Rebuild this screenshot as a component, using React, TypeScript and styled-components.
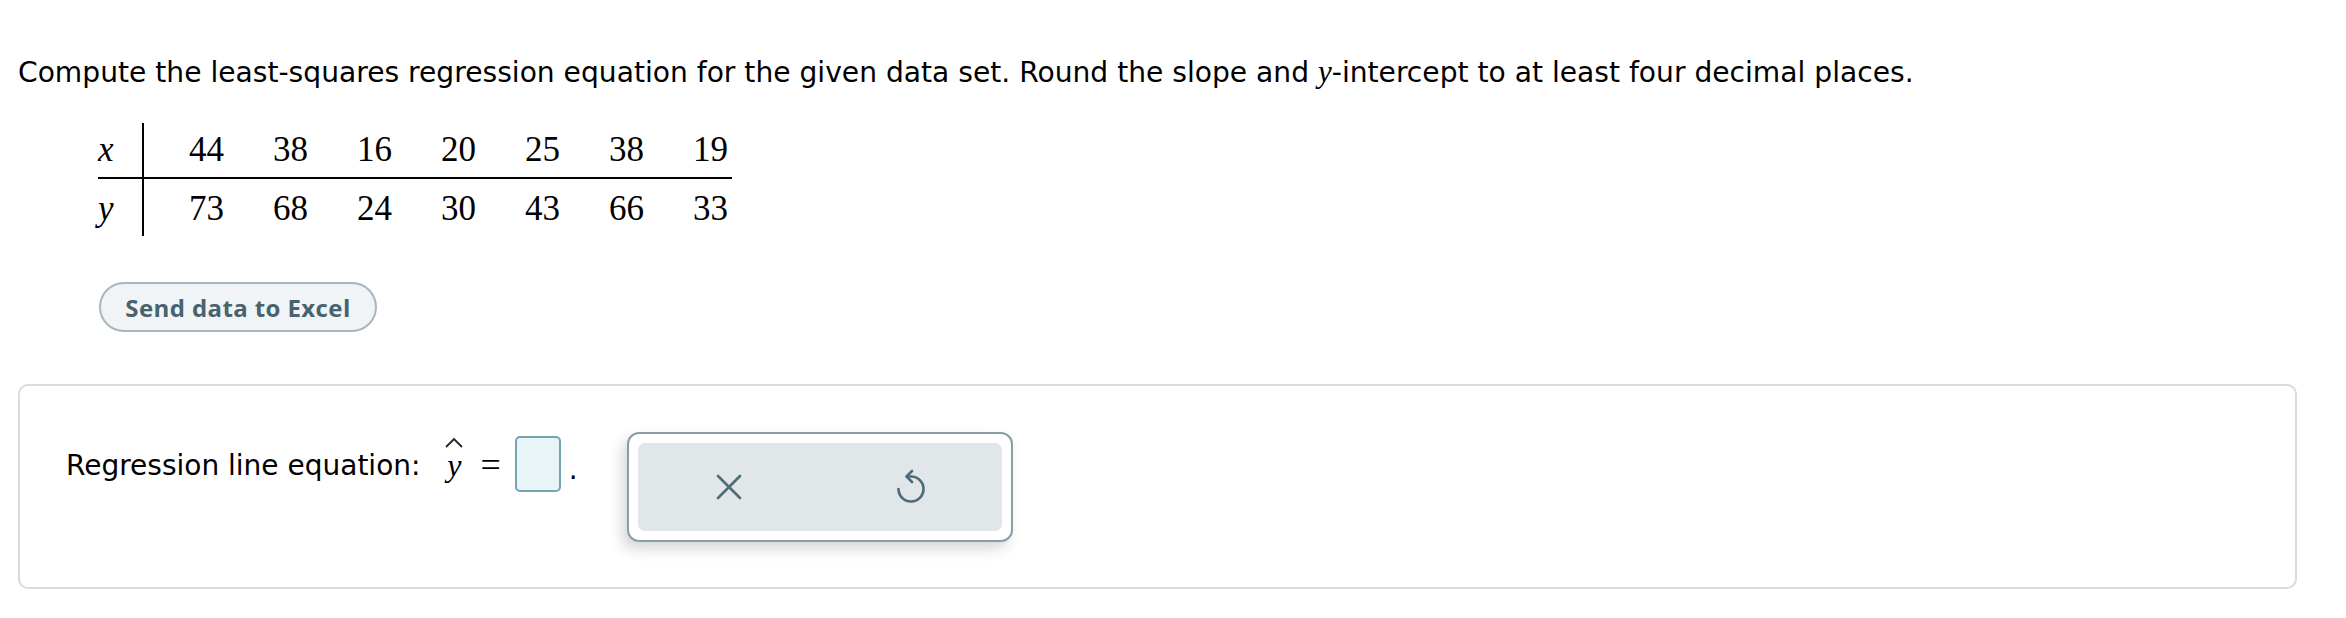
import React from "react";
import styled, { createGlobalStyle } from "styled-components";

const Global = createGlobalStyle`
  html, body { margin: 0; padding: 0; background: #ffffff; }
  body { width: 2346px; height: 618px; overflow: hidden; }
`;

const Page = styled.div`
  padding: 52px 49px 0 18px;
  font-family: "DejaVu Sans", Verdana, sans-serif;
  color: #000;
`;

const Question = styled.p`
  margin: 0;
  font-size: 28.15px;
  line-height: 40px;
`;

const MathVar = styled.span`
  font-family: "Liberation Serif", "Times New Roman", serif;
  font-style: italic;
  font-size: 31px;
`;

const DataTable = styled.div`
  margin: 30px 0 0 80px;
  display: grid;
  grid-template-columns: 46px repeat(7, 84px);
  grid-template-rows: 56px 57px;
  font-family: "Liberation Serif", "Times New Roman", serif;
  font-size: 35px;
  width: max-content;
`;

const Cell = styled.div<{ $label?: boolean; $top?: boolean }>`
  display: flex;
  align-items: center;
  justify-content: ${(p) => (p.$label ? "flex-start" : "flex-end")};
  padding-right: ${(p) => (p.$label ? "0" : "4px")};
  font-style: ${(p) => (p.$label ? "italic" : "normal")};
  border-bottom: ${(p) => (p.$top ? "2px solid #000" : "none")};
  border-right: ${(p) => (p.$label ? "2px solid #000" : "none")};
  padding-top: ${(p) => (p.$top ? "0" : "2px")};
  box-sizing: border-box;
`;

const ExcelButton = styled.button`
  margin: 46px 0 0 81px;
  width: 278px;
  height: 50px;
  border-radius: 25px;
  border: 2px solid #a7b7be;
  background: #f1f4f6;
  color: #46636f;
  font-family: "Open Sans", Lato, sans-serif;
  font-weight: 700;
  font-size: 24px;
  letter-spacing: 0.4px;
  display: flex;
  align-items: center;
  justify-content: center;
  padding: 0;
  box-sizing: border-box;
`;

const AnswerBox = styled.div`
  margin-top: 52px;
  height: 205px;
  box-sizing: border-box;
  border: 2px solid #d6dcdf;
  border-radius: 10px;
  padding: 46px 0 0 46px;
  display: flex;
  align-items: flex-start;
`;

const Equation = styled.div`
  margin-top: 4px;
  height: 56px;
  display: flex;
  align-items: center;
  font-size: 28px;
`;

const Label = styled.span`
  margin-right: 24px;
  margin-top: 2px;
`;

const HatVar = styled.span`
  display: inline-flex;
  flex-direction: column;
  align-items: center;
  font-family: "Liberation Serif", "Times New Roman", serif;
  font-style: italic;
  font-size: 32px;
  line-height: 1;
  margin-top: -10px;
`;

const Equals = styled.span`
  font-family: "Liberation Serif", "Times New Roman", serif;
  font-size: 36px;
  margin: 2px 14px 0 16px;
`;

const InputBox = styled.div`
  width: 46px;
  height: 56px;
  box-sizing: border-box;
  border: 2px solid #74a3b2;
  border-radius: 5px;
  background: #e8f4f7;
`;

const Period = styled.span`
  margin: 10px 0 0 8px;
  font-size: 28px;
`;

const Toolbar = styled.div`
  margin-left: 49px;
  width: 386px;
  height: 110px;
  box-sizing: border-box;
  border: 2px solid #8a9da5;
  border-radius: 12px;
  background: #fff;
  padding: 9px;
  box-shadow: -5px 7px 14px rgba(40, 60, 70, 0.2);
`;

const ToolInner = styled.div`
  height: 100%;
  border-radius: 7px;
  background: #e1e6e9;
  display: grid;
  grid-template-columns: 1fr 1fr;
`;

const ToolButton = styled.div`
  display: flex;
  align-items: center;
  justify-content: center;
  color: #4e6c78;
`;

const xs = [44, 38, 16, 20, 25, 38, 19];
const ys = [73, 68, 24, 30, 43, 66, 33];

export default function App() {
  return (
    <>
      <Global />
      <Page>
        <Question>
          Compute the least-squares regression equation for the given data set. Round the slope and{" "}
          <MathVar>y</MathVar>-intercept to at least four decimal places.
        </Question>
        <DataTable>
          <Cell $label $top>x</Cell>
          {xs.map((v, i) => (
            <Cell key={"x" + i} $top>{v}</Cell>
          ))}
          <Cell $label>y</Cell>
          {ys.map((v, i) => (
            <Cell key={"y" + i}>{v}</Cell>
          ))}
        </DataTable>
        <ExcelButton>Send data to Excel</ExcelButton>
        <AnswerBox>
          <Equation>
            <Label>Regression line equation:</Label>
            <HatVar>
              <svg width="20" height="12" viewBox="0 0 20 12">
                <path d="M2 10 L10 2 L18 10" fill="none" stroke="#222" strokeWidth="1.8" />
              </svg>
              <span>y</span>
            </HatVar>
            <Equals>=</Equals>
            <InputBox />
            <Period>.</Period>
          </Equation>
          <Toolbar>
            <ToolInner>
              <ToolButton>
                <svg width="26" height="26" viewBox="0 0 26 26">
                  <path d="M2 2 L24 24 M24 2 L2 24" stroke="currentColor" strokeWidth="2.6" strokeLinecap="round" />
                </svg>
              </ToolButton>
              <ToolButton>
                <svg width="32" height="36" viewBox="0 0 32 36">
                  <path
                    d="M3.5 20 A12.5 12.5 0 1 0 16 7.5 H14"
                    fill="none"
                    stroke="currentColor"
                    strokeWidth="2.7"
                    strokeLinecap="round"
                  />
                  <path
                    d="M17 2 L11.5 7.5 L17 13"
                    fill="none"
                    stroke="currentColor"
                    strokeWidth="2.7"
                    strokeLinecap="round"
                    strokeLinejoin="round"
                  />
                </svg>
              </ToolButton>
            </ToolInner>
          </Toolbar>
        </AnswerBox>
      </Page>
    </>
  );
}
